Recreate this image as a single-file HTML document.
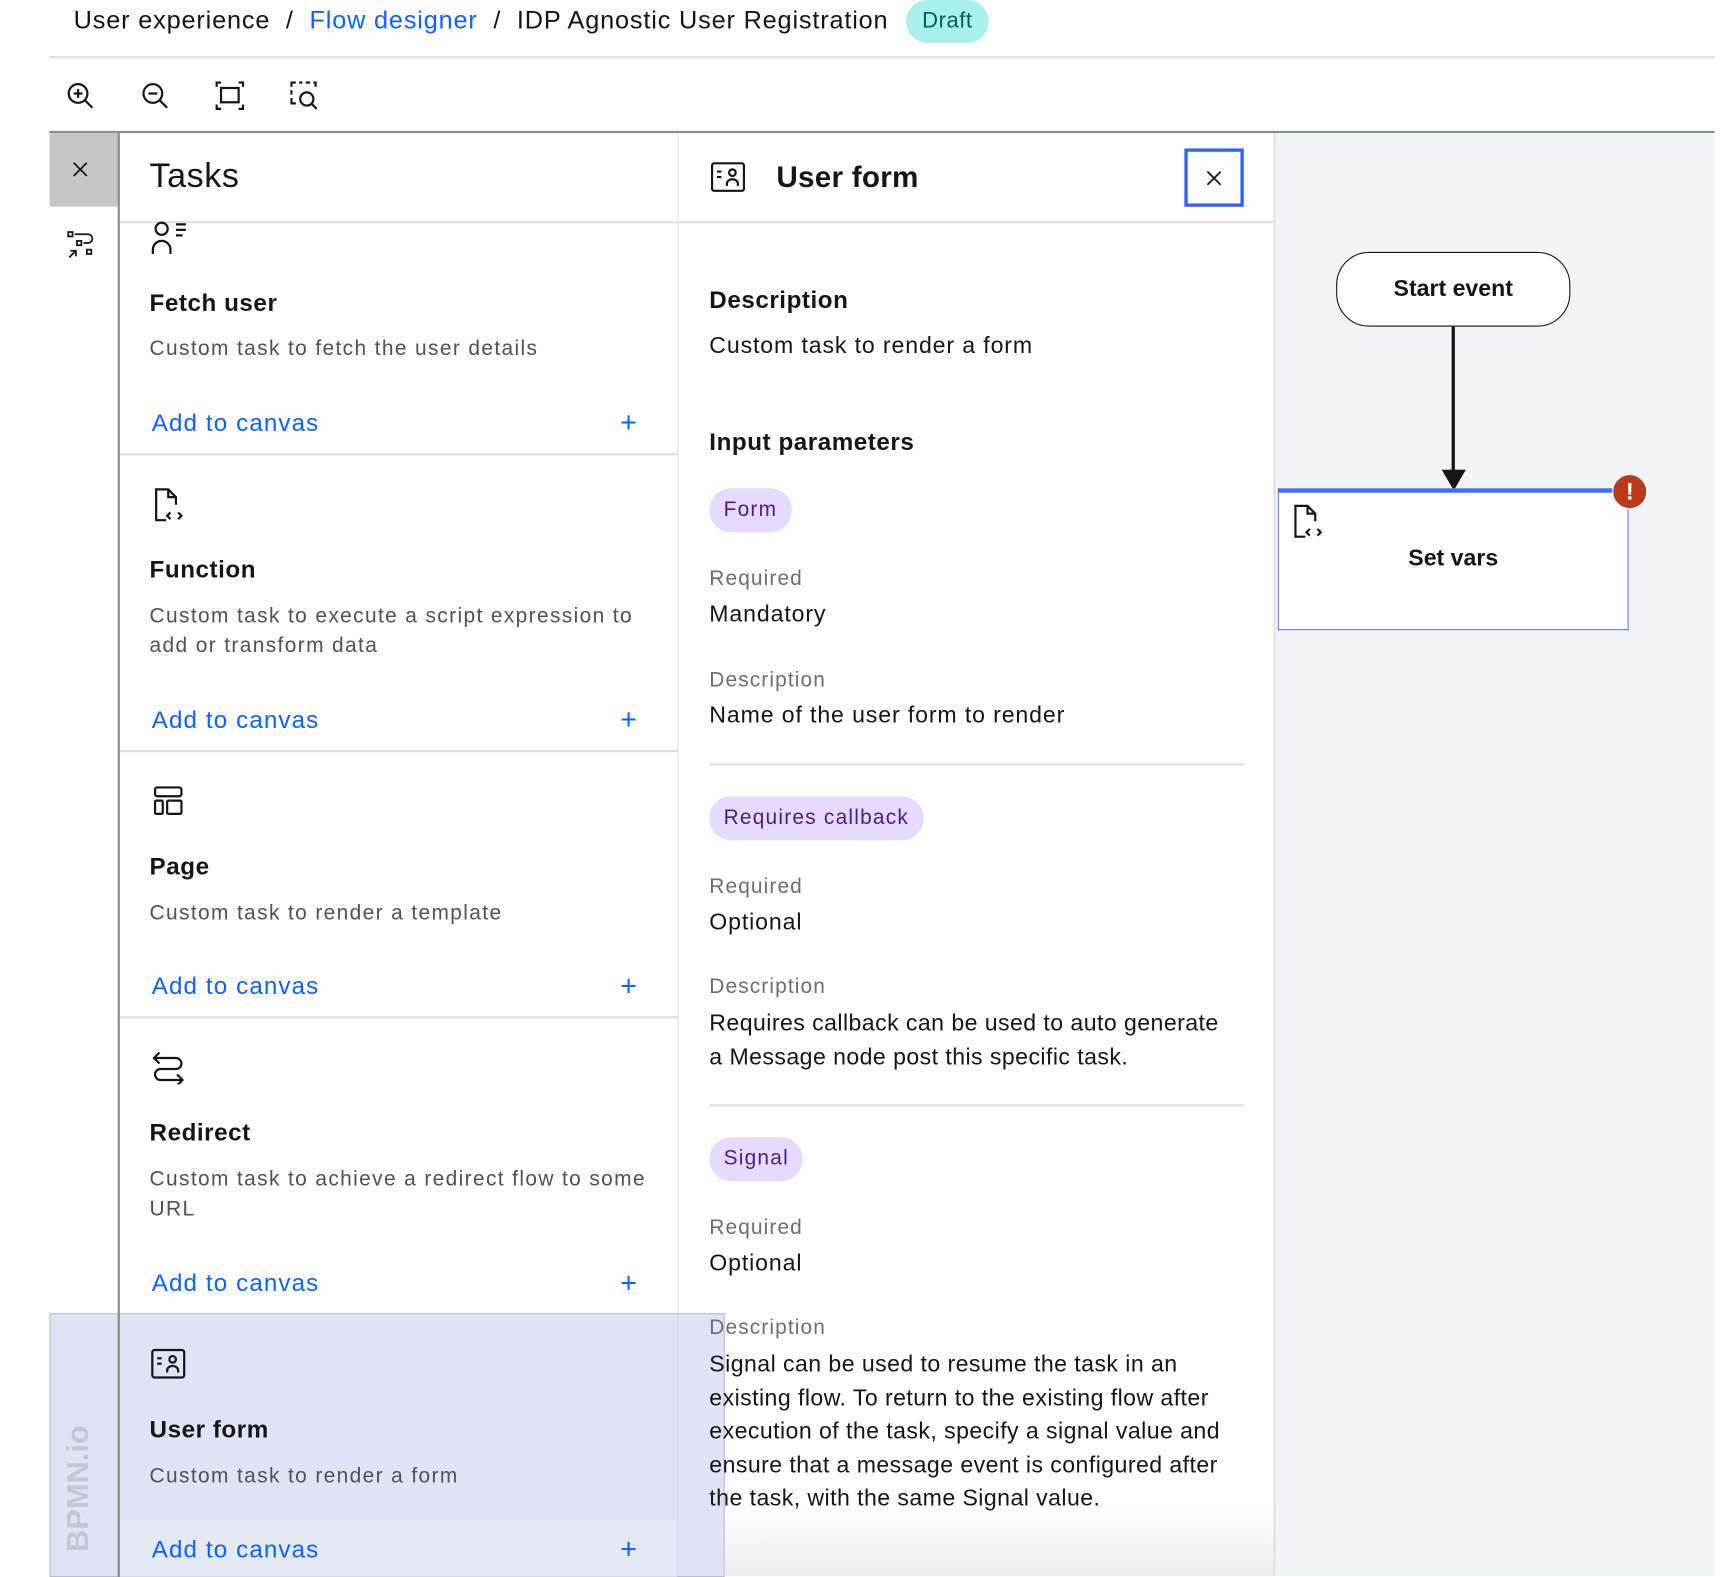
<!DOCTYPE html>
<html><head><meta charset="utf-8"><style>
html,body{margin:0;padding:0;width:1722px;height:1576px;overflow:hidden;background:#fff}
#w{position:absolute;left:0;top:0;width:1566px;height:1433px;transform:scale(1.0997,1.0998);transform-origin:0 0;font-family:"Liberation Sans",sans-serif;color:#161616}
.a{position:absolute}
.t{position:absolute;white-space:nowrap}
.ttl{font-size:22px;font-weight:bold;letter-spacing:.5px}
.dsc{font-size:19px;color:#525252;letter-spacing:1.25px;line-height:27px}
.add{font-size:22px;color:#0f62fe;letter-spacing:1px}
.plus{font-size:26px;color:#0f62fe}
.sep{position:absolute;left:109px;width:508px;height:2px;background:#e0e0e0}
.lbl{font-size:19px;color:#6f6f6f;letter-spacing:1px}
.val{font-size:21px;color:#161616;letter-spacing:.8px}
.tag{position:absolute;height:40px;border-radius:20px;background:#e8daff;color:#491d8b;font-size:19px;line-height:40px;padding:0 13px;letter-spacing:1.1px}
.hr{position:absolute;left:645px;width:486px;height:2px;background:#e0e0e0}
svg{position:absolute;fill:none;stroke:#161616;stroke-width:2}
</style></head><body><div id="w">
<div class="t" style="left:67px;top:5px;font-size:23px;letter-spacing:.75px">User experience &nbsp;/ &nbsp;<span style="color:#0f62fe">Flow designer</span> &nbsp;/ &nbsp;IDP Agnostic User Registration</div>
<div class="a" style="left:824px;top:0;width:75px;height:39px;border-radius:20px;background:#a7f0ec;color:#005d5d;font-size:20px;line-height:38px;text-align:center;letter-spacing:.5px">Draft</div>
<div class="a" style="left:45px;top:51px;width:1514px;height:2px;background:#e0e0e0"></div>
<svg style="left:60px;top:74px" width="26" height="26" viewBox="0 0 26 26"><circle cx="11" cy="11" r="8.5"/><path d="M17 17l7 7M11 7v8M7 11h8"/></svg>
<svg style="left:128px;top:74px" width="26" height="26" viewBox="0 0 26 26"><circle cx="11" cy="11" r="8.5"/><path d="M17 17l7 7M7 11h8"/></svg>
<svg style="left:196px;top:74px" width="26" height="26" viewBox="0 0 26 26"><rect x="5" y="6" width="16" height="13"/><path d="M1 5V1h4M21 1h4v4M25 21v4h-4M5 25H1v-4"/></svg>
<svg style="left:264px;top:74px" width="26" height="26" viewBox="0 0 26 26"><path d="M1 5V1h4M8 1h3M14 1h4M21 1h2v4M1 8v4M1 15v5h4"/><circle cx="15" cy="16" r="6"/><path d="M19 20l5 5"/></svg>
<div class="a" style="left:45px;top:119px;width:1514px;height:2px;background:#8d8d8d"></div>
<div class="a" style="left:45px;top:121px;width:63px;height:67px;background:#c6c6c6"></div>
<svg style="left:65px;top:146px;stroke-width:1.6" width="16" height="16" viewBox="0 0 16 16"><path d="M2 2l12 12M14 2L2 14"/></svg>
<svg style="left:61px;top:210px;stroke-width:1.6" width="26" height="26" viewBox="0 0 26 26"><rect x="1" y="1" width="4" height="4"/><rect x="9" y="9" width="4" height="4"/><rect x="18" y="17" width="4" height="4"/><path d="M7 3h12a4 4 0 010 8h-4M2 24l6-6M3 18h5v5"/></svg>
<div class="a" style="left:107px;top:121px;width:2px;height:1312px;background:#8d8d8d"></div>
<div class="a" style="left:616px;top:121px;width:1px;height:1312px;background:#e0e0e0"></div>
<div class="a" style="left:1158px;top:121px;width:2px;height:1312px;background:#e0e0e0"></div>
<div class="t" style="left:136px;top:142px;font-size:31px;letter-spacing:.5px">Tasks</div>
<div class="a" style="left:109px;top:201px;width:1050px;height:2px;background:#e0e0e0"></div>
<svg style="left:137px;top:201px" width="36" height="32" viewBox="0 0 36 32"><circle cx="10" cy="7" r="5.5"/><path d="M2 30v-4a8 8 0 0116 0v4M23 3h9M23 8h9M23 13h6"/></svg>
<div class="t ttl" style="left:136px;top:263px">Fetch user</div>
<div class="t dsc" style="left:136px;top:304px">Custom task to fetch the user details</div>
<div class="t add" style="left:138px;top:372px">Add to canvas</div><div class="t plus" style="left:564px;top:369px">+</div>
<div class="sep" style="top:412px"></div>
<svg style="left:140px;top:443px" width="28" height="32" viewBox="0 0 28 32"><path d="M11 30H2V2h11l7 7v7M13 2v7h7M15 23l-3 3 3 3M22 23l3 3-3 3"/></svg>
<div class="t ttl" style="left:136px;top:505px">Function</div>
<div class="t dsc" style="left:136px;top:547px">Custom task to execute a script expression to<br>add or transform data</div>
<div class="t add" style="left:138px;top:642px">Add to canvas</div><div class="t plus" style="left:564px;top:639px">+</div>
<div class="sep" style="top:682px"></div>
<svg style="left:139px;top:714px" width="28" height="28" viewBox="0 0 28 28"><rect x="2" y="2" width="24" height="8" rx="2"/><rect x="2" y="14" width="7" height="12" rx="1"/><rect x="13" y="14" width="13" height="12" rx="1"/></svg>
<div class="t ttl" style="left:136px;top:775px">Page</div>
<div class="t dsc" style="left:136px;top:817px">Custom task to render a template</div>
<div class="t add" style="left:138px;top:884px">Add to canvas</div><div class="t plus" style="left:564px;top:881px">+</div>
<div class="sep" style="top:924px"></div>
<svg style="left:137px;top:954px" width="32" height="32" viewBox="0 0 32 32"><path d="M8 3L3 8l5 5M3 8h20a5 5 0 010 10H9a5 5 0 000 10h20M24 23l5 5-5 5"/></svg>
<div class="t ttl" style="left:136px;top:1017px">Redirect</div>
<div class="t dsc" style="left:136px;top:1059px">Custom task to achieve a redirect flow to some<br>URL</div>
<div class="t add" style="left:138px;top:1154px">Add to canvas</div><div class="t plus" style="left:564px;top:1151px">+</div>
<div class="a" style="left:45px;top:1194px;width:614px;height:240px;background:rgba(205,214,236,.65);border:1px solid #b8bfcc;box-sizing:border-box"></div>
<div class="a" style="left:109px;top:1382px;width:507px;height:52px;background:rgba(232,236,246,.6)"></div>
<div class="a" style="left:107px;top:1194px;width:2px;height:240px;background:#8d8d8d"></div>
<svg style="left:137px;top:1226px" width="32" height="28" viewBox="0 0 32 28"><rect x="1.5" y="1.5" width="29" height="25" rx="2"/><path d="M6 9h4M6 14h4"/><circle cx="20" cy="10" r="3"/><path d="M15 22v-2a5 4 0 0110 0v2"/></svg>
<div class="t ttl" style="left:136px;top:1287px">User form</div>
<div class="t dsc" style="left:136px;top:1329px">Custom task to render a form</div>
<div class="t add" style="left:138px;top:1396px">Add to canvas</div><div class="t plus" style="left:564px;top:1393px">+</div>
<div class="t" style="left:26px;top:1350px;font-size:28px;font-weight:bold;color:#c2c7d1;transform:rotate(-90deg);transform-origin:50% 50%;width:90px;text-align:center;letter-spacing:0">BPMN.io</div>
<svg style="left:646px;top:147px" width="32" height="28" viewBox="0 0 32 28"><rect x="1.5" y="1.5" width="29" height="25" rx="2"/><path d="M6 9h4M6 14h4"/><circle cx="20" cy="10" r="3"/><path d="M15 22v-2a5 4 0 0110 0v2"/></svg>
<div class="t" style="left:706px;top:146px;font-size:27px;font-weight:bold;letter-spacing:.2px">User form</div>
<div class="a" style="left:1077px;top:135px;width:54px;height:53px;border:3px solid #2f62f5;box-sizing:border-box"></div>
<svg style="left:1097px;top:155px;stroke-width:1.6" width="14" height="14" viewBox="0 0 14 14"><path d="M1 1l12 12M13 1L1 13"/></svg>
<div class="t ttl" style="left:645px;top:260px">Description</div>
<div class="t val" style="left:645px;top:303px">Custom task to render a form</div>
<div class="t ttl" style="left:645px;top:389px">Input parameters</div>
<div class="tag" style="left:645px;top:444px">Form</div>
<div class="t lbl" style="left:645px;top:516px">Required</div>
<div class="t val" style="left:645px;top:547px">Mandatory</div>
<div class="t lbl" style="left:645px;top:608px">Description</div>
<div class="t val" style="left:645px;top:639px">Name of the user form to render</div>
<div class="hr" style="top:694px"></div>
<div class="tag" style="left:645px;top:724px">Requires callback</div>
<div class="t lbl" style="left:645px;top:796px">Required</div>
<div class="t val" style="left:645px;top:827px">Optional</div>
<div class="t lbl" style="left:645px;top:887px">Description</div>
<div class="t val" style="left:645px;top:916px;line-height:30.5px;letter-spacing:.4px">Requires callback can be used to auto generate<br>a Message node post this specific task.</div>
<div class="hr" style="top:1004px"></div>
<div class="tag" style="left:645px;top:1034px">Signal</div>
<div class="t lbl" style="left:645px;top:1106px">Required</div>
<div class="t val" style="left:645px;top:1137px">Optional</div>
<div class="t lbl" style="left:645px;top:1197px">Description</div>
<div class="t val" style="left:645px;top:1226px;line-height:30.5px;letter-spacing:.4px">Signal can be used to resume the task in an<br>existing flow. To return to the existing flow after<br>execution of the task, specify a signal value and<br>ensure that a message event is configured after<br>the task, with the same Signal value.</div>
<div class="a" style="left:659px;top:1370px;width:499px;height:63px;background:linear-gradient(#fff0,#ececec)"></div>
<div class="a" style="left:1160px;top:121px;width:399px;height:1312px;background:#f2f4f8"></div>
<div class="a" style="left:1215px;top:229px;width:213px;height:68px;border:1.5px solid #161616;border-radius:30px;background:#fff;box-sizing:border-box;text-align:center;line-height:66px;font-size:21px;font-weight:bold">Start event</div>
<div class="a" style="left:1320px;top:297px;width:3px;height:132px;background:#161616"></div>
<svg style="left:1311px;top:427px;fill:#161616;stroke:none" width="22" height="20" viewBox="0 0 22 20"><path d="M0 0h22L11 19z"/></svg>
<div class="a" style="left:1162px;top:444px;width:319px;height:129px;background:#fff;border:1.5px solid #5b86f7;border-top:4px solid #3d6ff5;box-sizing:border-box"></div>
<div class="a" style="left:1466px;top:431px;width:30px;height:30px;border-radius:50%;background:#ba3a1e;border:1px solid #fff;color:#fff;font-weight:bold;font-size:22px;text-align:center;line-height:30px">!</div>
<svg style="left:1176px;top:458px" width="28" height="32" viewBox="0 0 28 32"><path d="M11 30H2V2h11l7 7v7M13 2v7h7M15 23l-3 3 3 3M22 23l3 3-3 3"/></svg>
<div class="t" style="left:1162px;top:496px;width:319px;text-align:center;font-size:21px;font-weight:bold">Set vars</div>
</div></body></html>
